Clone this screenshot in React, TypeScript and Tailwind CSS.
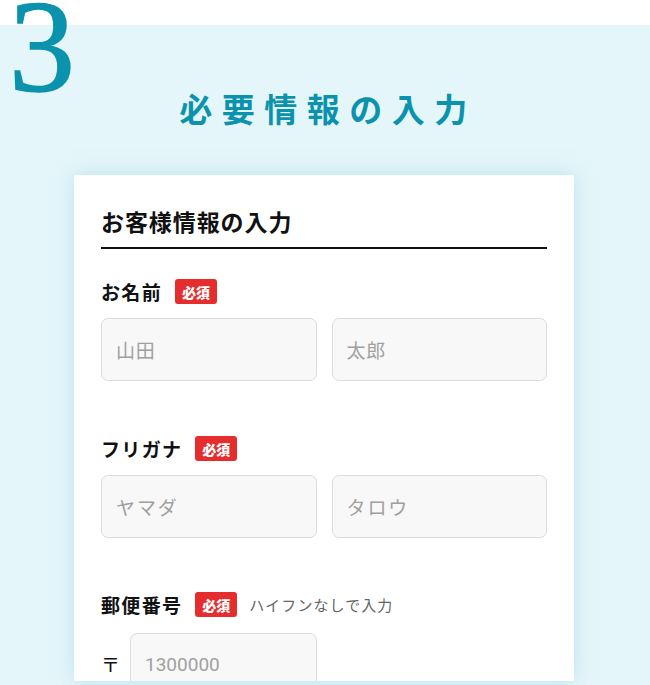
import React from 'react';

const jp = '"Noto Sans CJK JP", "Noto Sans", sans-serif';

const Badge: React.FC = () => (
    <span className="ml-[13px] inline-flex h-[25px] w-[42px] items-center justify-center rounded-[3px] bg-[#e52d2d] text-[14px] font-black leading-none text-white">
        必須
    </span>
);

interface FieldLabelProps {
    label: string;
    hint?: string;
}

const FieldLabel: React.FC<FieldLabelProps> = ({ label, hint }) => (
    <div className="flex h-[25px] items-center">
        <span className="text-[19px] font-bold leading-none tracking-[0.07em] text-[#111]">{label}</span>
        <Badge />
        {hint && (
            <span className="ml-[12px] text-[15px] leading-none tracking-[0.07em] text-[#666]">{hint}</span>
        )}
    </div>
);

const TextInput: React.FC<{ placeholder: string; className?: string; font?: string }> = ({
    placeholder,
    className,
    font
}) => (
    <input
        type="text"
        placeholder={placeholder}
        className={
            'h-[63px] rounded-[7px] border border-[#dcdcdc] bg-[#f8f8f8] px-[14px] text-[19px] text-[#333] outline-none placeholder:text-[#a0a0a0] ' +
            (className ?? '')
        }
        style={{ fontFamily: font ?? jp }}
    />
);

export default function App() {
    return (
        <div className="relative min-h-[685px] w-[650px] overflow-hidden bg-white" style={{ fontFamily: jp }}>
            <div className="h-[25px] bg-white" />
            <section className="bg-[#e5f6fa] pb-[4px] pt-[67px]">
                <h2 className="pl-[6px] text-center text-[33px] font-bold leading-none tracking-[9.5px] text-[#0b93ad]">
                    必要情報の入力
                </h2>

                <div className="ml-[74px] mt-[50px] h-[506px] w-[500px] overflow-hidden bg-white px-[27px] pt-[30px] shadow-[0_0_18px_rgba(150,210,228,0.55)]">
                    <h3 className="border-b-2 border-[#111] pb-[9px] text-[23px] font-bold leading-[33px] tracking-[0.04em] text-[#111]">
                        お客様情報の入力
                    </h3>

                    <div className="mt-[30px]">
                        <FieldLabel label="お名前" />
                        <div className="mt-[14px] grid grid-cols-2 gap-[15px]">
                            <TextInput placeholder="山田" className="w-full tracking-[0.04em]" />
                            <TextInput placeholder="太郎" className="w-full tracking-[0.04em]" />
                        </div>
                    </div>

                    <div className="mt-[55px]">
                        <FieldLabel label="フリガナ" />
                        <div className="mt-[14px] grid grid-cols-2 gap-[15px]">
                            <TextInput placeholder="ヤマダ" className="w-full tracking-[0.1em]" />
                            <TextInput placeholder="タロウ" className="w-full tracking-[0.1em]" />
                        </div>
                    </div>

                    <div className="mt-[54px]">
                        <FieldLabel label="郵便番号" hint="ハイフンなしで入力" />
                        <div className="mt-[16px] flex items-center">
                            <span className="w-[29px] text-[19px] text-[#111]">〒</span>
                            <TextInput
                                placeholder="1300000"
                                className="w-[187px]"
                                font='Roboto, "Noto Sans CJK JP", sans-serif'
                            />
                        </div>
                    </div>
                </div>
            </section>

            <span
                className="pointer-events-none absolute left-[9px] top-[-19px] select-none text-[132px] leading-none text-[#0b93ad] [-webkit-text-stroke:1.6px_#0b93ad]"
                style={{ fontFamily: '"Liberation Serif", "DejaVu Serif", serif' }}
            >
                3
            </span>
        </div>
    );
}
